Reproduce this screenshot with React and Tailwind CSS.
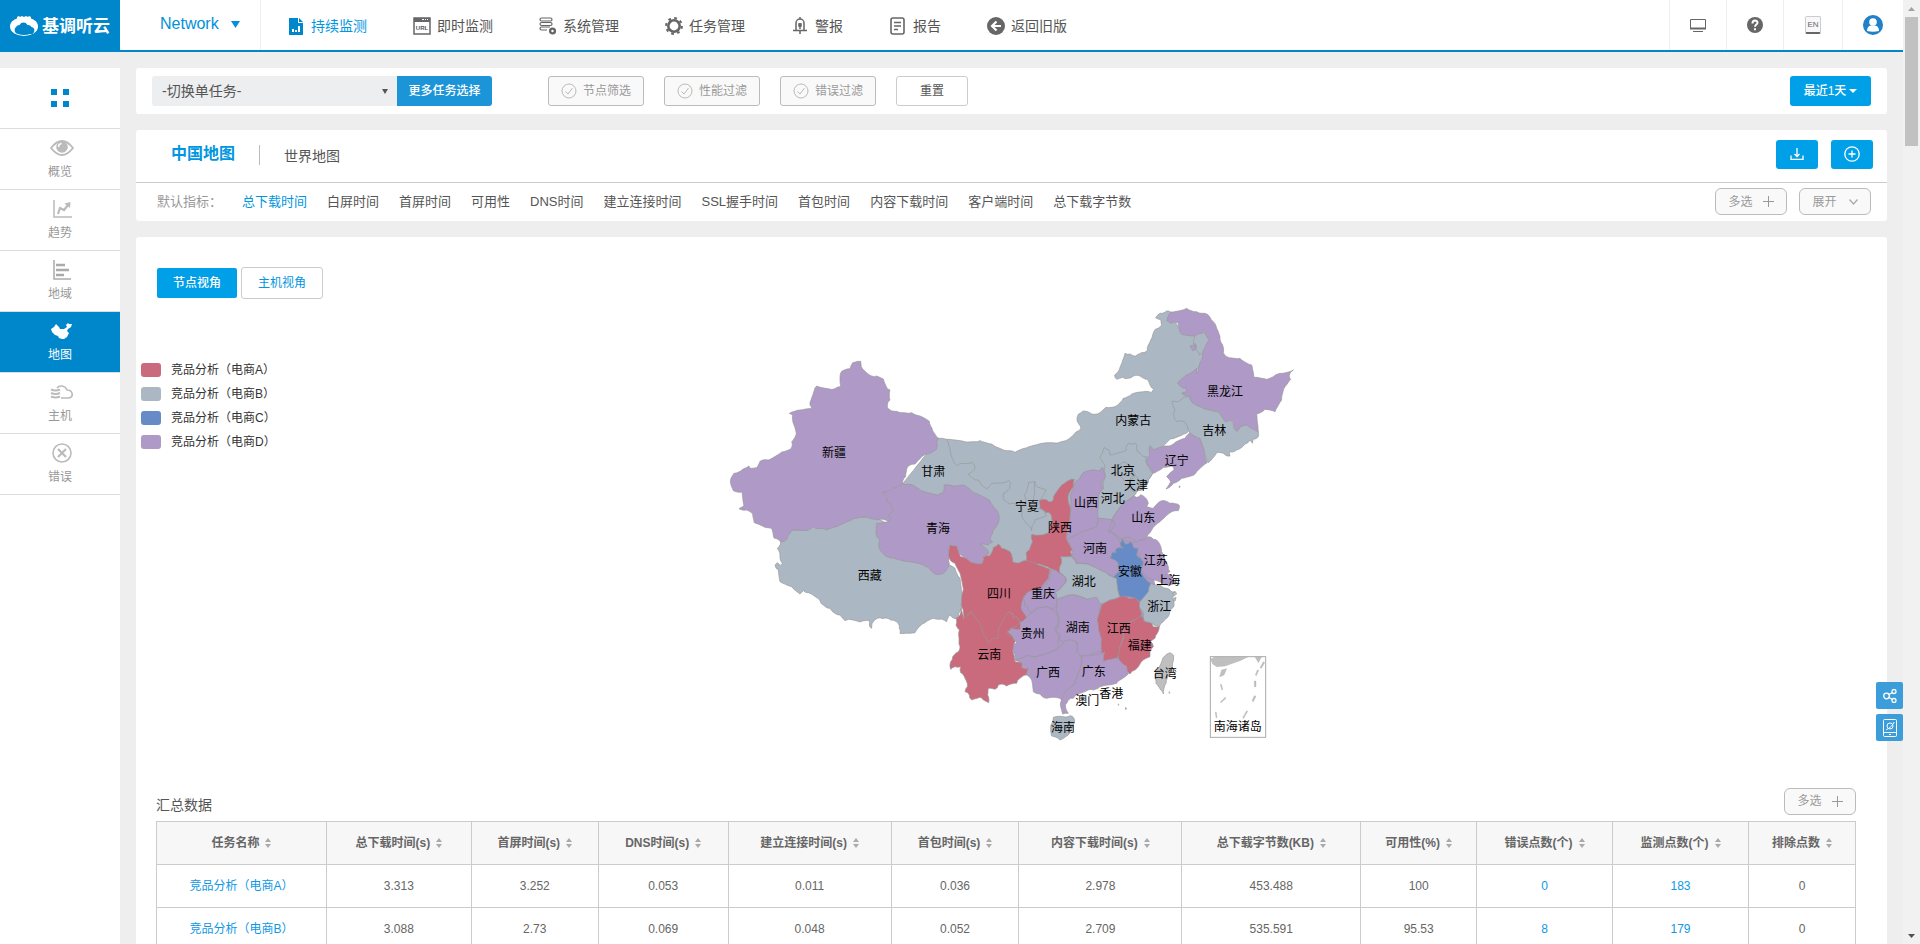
import React from 'react';

const PURPLE = '#ae99c7';
const SLATE = '#abb7c3';
const RED = '#c96a7d';
const BLUE = '#678bc7';
const GREY = '#bfbfbf';

// flat areas under the inland provinces, so no background shows between their borders
const backing = [
  { fill: PURPLE, points: '900,840 1000,810 1060,745 1180,690 1270,755 1300,860 1325,960 1235,1100 1200,1140 1080,1190 1000,1200 940,1150 890,1110 890,1000' },
  { fill: RED, points: '735,940 900,930 900,1030 870,1080 735,1080' },
];

// Order matters: the northern land mass is drawn first and the other provinces sit on top of it.
const provinces = [
  { id: 'neimenggu', fill: SLATE, points: '656,445 680,448 730,454 780,452 815,462 860,482 885,487 920,473 965,460 1005,459 1045,448 1068,426 1083,414 1072,395 1076,372 1090,363 1115,372 1140,368 1158,352 1190,347 1210,325 1235,312 1270,305 1295,308 1302,298 1288,280 1280,268 1260,258 1240,258 1225,265 1208,262 1190,268 1184,255 1200,232 1215,190 1230,192 1245,199 1265,188 1282,182 1285,165 1298,135 1306,118 1325,105 1323,90 1307,84 1320,70 1340,63 1352,66 1382,120 1465,130 1470,150 1448,205 1430,240 1400,300 1420,330 1400,400 1405,425 1350,447 1320,475 1310,520 1298,550 1285,570 1280,585 1265,600 1250,604 1245,612 1240,640 1200,660 1180,690 1140,690 1050,800 1000,850 900,840 800,800 780,762 700,740 560,600 547,582' },
  { id: 'xizang', fill: SLATE, points: '182,756 200,748 218,720 255,722 280,710 320,720 380,695 400,686 440,681 478,688 500,700 600,760 688,825 705,835 720,865 728,920 725,955 715,980 705,986 690,975 680,995 665,987 640,985 615,998 600,1008 585,1028 540,1030 538,1015 530,995 512,990 495,984 480,983 460,995 455,1015 448,1005 448,992 420,996 385,988 375,992 360,975 345,970 330,955 310,945 300,932 265,908 250,902 240,912 215,890 180,875 175,840 165,825 172,818 180,827 187,820 180,795 172,775' },
  { id: 'xinjiang', fill: PURPLE, points: '422,214 424,230 440,248 455,258 470,258 490,267 498,288 510,300 510,330 502,345 507,358 530,364 575,368 600,378 628,394 636,415 656,445 650,455 648,480 630,490 605,500 585,522 563,530 557,560 547,582 520,595 488,607 498,620 500,633 512,640 519,660 507,672 513,685 505,694 478,688 440,681 400,686 380,695 350,710 320,720 295,716 280,710 255,722 218,720 200,748 182,756 162,744 155,715 135,712 103,698 98,672 80,660 57,656 72,648 66,606 40,602 31,573 42,550 68,538 87,528 90,535 110,533 120,514 145,510 185,486 213,476 215,455 229,430 222,405 218,375 208,370 240,360 265,356 277,358 270,345 290,288 325,296 345,296 362,290 360,260 365,244 390,236 398,218' },
  { id: 'qinghai', fill: PURPLE, points: '547,582 570,583 600,600 655,615 668,610 672,585 700,588 730,585 760,608 785,618 810,632 830,660 837,690 820,720 810,745 818,756 805,765 780,762 798,775 807,790 795,796 785,822 750,815 730,800 710,780 690,765 688,820 670,850 645,852 625,832 610,825 560,815 520,804 500,800 478,775 480,750 468,730 470,700 505,694 513,685 507,672 519,660 512,640 500,633 498,620 488,607 520,595' },
  { id: 'heilongjiang', fill: PURPLE, points: '1352,66 1400,55 1430,65 1455,70 1470,82 1480,95 1490,115 1500,140 1508,165 1510,188 1520,200 1560,205 1595,225 1602,262 1640,268 1660,260 1680,250 1720,240 1708,255 1712,268 1695,290 1685,330 1665,365 1635,358 1610,372 1615,425 1580,405 1562,410 1550,425 1540,400 1530,390 1515,395 1495,365 1440,350 1415,335 1410,318 1385,310 1400,305 1398,295 1390,295 1373,280 1400,255 1430,235 1432,250 1445,210 1448,190 1468,150 1455,128 1425,138 1385,133 1375,100 1365,95 1350,100 1340,92' },
  { id: 'jiagedaqi', fill: PURPLE, points: '1410,168 1425,160 1428,175 1418,182' },
  { id: 'jilin', fill: SLATE, points: '1355,335 1370,336 1390,322 1410,320 1415,335 1440,350 1495,365 1515,395 1530,390 1540,400 1550,425 1562,410 1580,405 1615,425 1615,440 1600,448 1597,460 1590,450 1575,462 1550,480 1530,485 1530,498 1510,490 1490,488 1465,518 1452,480 1440,445 1410,430 1398,400 1385,392 1370,395 1362,380 1365,360' },
  { id: 'liaoning', fill: PURPLE, points: '1410,428 1428,440 1440,445 1452,480 1462,518 1430,545 1420,556 1385,565 1360,580 1345,594 1338,597 1352,575 1340,560 1362,540 1355,528 1330,532 1298,550 1288,530 1277,515 1290,495 1290,467 1302,480 1340,468 1360,462 1395,445' },
  { id: 'ningxia', fill: SLATE, points: '945,575 925,578 913,615 918,640 900,640 905,675 920,700 935,722 942,700 945,690 978,678 970,662 950,655 940,630 945,610' },
  { id: 'hebei', fill: SLATE, points: '1155,562 1152,545 1155,530 1140,505 1153,472 1165,478 1170,495 1218,482 1225,460 1248,460 1252,485 1265,496 1280,500 1278,515 1298,550 1285,570 1280,585 1265,600 1250,604 1240,618 1215,635 1195,660 1175,692 1130,685 1136,650 1135,615 1150,595' },
  { id: 'beijing', fill: SLATE, points: '1185,545 1180,530 1210,515 1235,530 1245,555 1230,570 1212,572 1200,560' },
  { id: 'tianjin', fill: SLATE, points: '1230,570 1245,556 1262,575 1256,600 1240,606 1228,590' },
  { id: 'shanxi', fill: PURPLE, points: '1148,532 1140,542 1125,540 1090,548 1078,568 1063,580 1050,615 1052,650 1045,710 1042,748 1070,742 1090,725 1130,710 1133,685 1132,650 1135,615 1150,595 1145,575 1155,562' },
  { id: 'shaanxi', fill: RED, points: '1063,568 1045,572 1025,585 1010,605 1000,622 995,635 980,630 958,632 960,655 978,668 990,670 995,700 988,725 960,735 935,733 938,755 928,780 918,790 918,812 950,822 990,835 1018,850 1025,815 1022,800 1055,798 1050,785 1058,780 1040,748 1045,710 1050,650 1045,615 1060,590' },
  { id: 'henan', fill: PURPLE, points: '1135,685 1178,690 1165,725 1185,735 1200,750 1205,770 1188,778 1170,800 1195,820 1198,845 1185,862 1160,850 1140,840 1110,825 1070,820 1058,800 1055,775 1043,750 1090,725 1130,710' },
  { id: 'jiangsu', fill: PURPLE, points: '1205,748 1240,758 1250,755 1265,750 1285,740 1300,748 1315,755 1325,785 1335,810 1345,830 1350,845 1340,850 1362,875 1335,885 1300,870 1280,865 1265,845 1270,820 1250,780 1230,770' },
  { id: 'shandong', fill: PURPLE, points: '1240,618 1250,622 1262,614 1270,618 1285,640 1280,650 1300,655 1325,632 1350,640 1378,646 1375,662 1350,668 1320,695 1300,712 1290,728 1283,735 1280,745 1265,750 1250,755 1230,742 1205,748 1170,725 1185,705 1178,690 1195,660 1215,635' },
  { id: 'anhui', fill: BLUE, points: '1205,748 1215,762 1232,755 1240,772 1255,775 1250,795 1262,805 1270,815 1258,840 1275,865 1293,880 1288,905 1260,935 1245,925 1225,920 1200,922 1192,890 1182,860 1198,845 1195,820 1170,805 1175,790 1188,788 1190,775 1210,775 1200,760' },
  { id: 'zhejiang', fill: SLATE, points: '1293,880 1320,885 1340,895 1352,903 1365,905 1360,930 1362,948 1350,960 1340,985 1330,995 1318,1010 1295,1000 1282,1000 1270,985 1268,965 1255,950 1260,935 1285,905' },
  { id: 'shanghai', fill: PURPLE, points: '1340,850 1355,855 1368,882 1345,888 1330,875' },
  { id: 'hubei', fill: SLATE, points: '1022,800 1055,800 1070,822 1110,825 1140,840 1160,850 1190,865 1192,890 1200,922 1165,932 1140,942 1120,930 1100,928 1055,915 1010,930 1005,905 1025,890 1040,870 1035,860 1018,845 1025,820' },
  { id: 'chongqing', fill: PURPLE, points: '990,838 1010,842 1035,860 1038,870 1025,890 1005,905 1012,945 1000,958 975,950 950,955 940,970 930,965 922,950 912,945 910,925 925,905 970,890 988,865' },
  { id: 'yunnan', fill: RED, points: '722,955 730,985 755,965 865,965 900,995 890,1010 870,1015 862,1030 885,1050 880,1090 885,1115 905,1118 905,1132 925,1135 920,1155 900,1165 890,1180 860,1188 845,1182 835,1185 825,1198 805,1195 803,1215 806,1238 790,1230 780,1222 755,1230 748,1215 735,1205 742,1190 735,1165 722,1148 722,1130 705,1130 692,1138 692,1115 698,1100 715,1085 720,1070 718,1020 708,1005 708,985 720,975' },
  { id: 'sichuan', fill: RED, points: '690,765 710,768 722,800 750,815 785,822 790,800 808,798 820,772 835,762 845,775 870,785 878,815 900,818 920,812 990,838 985,865 965,890 925,905 908,930 905,960 925,990 915,998 900,995 890,980 880,985 878,970 865,965 840,1010 835,1045 820,1045 805,1058 790,1035 780,1000 765,980 755,965 745,970 730,985 725,950 730,900 720,850 705,820 688,805' },
  { id: 'guizhou', fill: PURPLE, points: '862,1025 875,1015 900,1018 900,1000 930,970 950,955 975,950 1000,960 1012,975 1012,1000 1005,1015 1018,1040 1015,1075 980,1090 950,1100 920,1095 885,1110 885,1095 876,1085 880,1065 890,1058 878,1040' },
  { id: 'hunan', fill: PURPLE, points: '1012,930 1055,915 1100,928 1130,922 1145,945 1138,965 1132,990 1136,1020 1145,1050 1145,1085 1110,1095 1090,1100 1070,1085 1070,1055 1055,1050 1040,1062 1018,1050 1022,1035 1008,1020 1018,1000 1012,970' },
  { id: 'jiangxi', fill: RED, points: '1145,945 1170,930 1200,920 1213,918 1225,925 1245,922 1258,935 1265,970 1255,985 1240,990 1215,1010 1210,1040 1200,1070 1192,1105 1155,1115 1148,1100 1145,1050 1136,1020 1132,990' },
  { id: 'fujian', fill: RED, points: '1265,978 1272,995 1290,998 1300,1010 1318,1010 1312,1030 1305,1045 1292,1055 1300,1070 1290,1085 1290,1100 1270,1110 1260,1122 1245,1140 1230,1152 1222,1145 1220,1130 1195,1105 1200,1070 1212,1040 1215,1010 1240,992' },
  { id: 'guangxi', fill: PURPLE, points: '885,1110 920,1095 950,1100 980,1090 1015,1075 1030,1055 1055,1050 1070,1060 1070,1085 1085,1105 1080,1140 1065,1180 1040,1200 1025,1230 1005,1222 980,1225 960,1212 940,1205 935,1170 920,1155 925,1135 905,1132 905,1118' },
  { id: 'guangdong', fill: PURPLE, points: '1090,1095 1120,1095 1155,1085 1150,1115 1195,1105 1220,1130 1225,1152 1200,1170 1190,1180 1165,1185 1140,1190 1120,1200 1105,1200 1080,1210 1060,1225 1045,1230 1036,1245 1045,1270 1028,1272 1022,1250 1025,1230 1040,1200 1065,1180 1080,1140 1085,1105' },
  { id: 'hainan', fill: SLATE, points: '1000,1282 1030,1280 1050,1277 1062,1285 1060,1305 1045,1335 1020,1350 995,1338 993,1305' },
  { id: 'taiwan', fill: GREY, points: '1350,1088 1360,1095 1358,1120 1350,1150 1338,1180 1330,1212 1322,1200 1308,1180 1306,1160 1312,1140 1328,1105' },
];

// inner borders that separate provinces of the same colour
const borders = [
  '680,448 692,490 700,512 712,527 730,520 757,517 765,535 745,552 755,562 775,570 785,585 800,596 815,580 850,578 866,570 872,580 870,595 850,610 852,630 868,642 900,645',
  '1425,138 1420,160 1428,180 1438,195 1445,190',
  '945,575 950,590 978,600 958,632',
];

const islets = [
  '1358,910 1366,905 1370,912 1362,918',
  '1362,925 1368,922 1366,932 1360,934',
  '1195,1242 1197,1244 1195,1246',
  '1217,1252 1220,1257 1216,1258',
  '1377,588 1381,590 1378,593',
  '1348,1205 1350,1208 1347,1210',
];

const labels = [
  ['新疆', 342, 488], ['甘肃', 640, 545], ['青海', 654, 718], ['西藏', 449, 858],
  ['四川', 837, 911], ['内蒙古', 1240, 392], ['黑龙江', 1515, 305], ['吉林', 1483, 422],
  ['辽宁', 1370, 512], ['北京', 1208, 542], ['天津', 1248, 588], ['河北', 1178, 627],
  ['山西', 1098, 638], ['山东', 1270, 685], ['宁夏', 921, 650], ['陕西', 1020, 713],
  ['河南', 1125, 777], ['江苏', 1307, 812], ['安徽', 1230, 847], ['上海', 1345, 873],
  ['湖北', 1091, 876], ['重庆', 969, 911], ['浙江', 1318, 950], ['贵州', 938, 1031],
  ['湖南', 1073, 1014], ['江西', 1196, 1017], ['福建', 1259, 1067], ['云南', 808, 1095],
  ['广西', 984, 1150], ['广东', 1121, 1146], ['香港', 1174, 1212], ['澳门', 1102, 1232],
  ['海南', 1029, 1313], ['台湾', 1334, 1153], ['南海诸岛', 1553, 1311],
];

// Breaks every edge into short uneven steps. The offset only depends on the two
// end points, so neighbouring provinces get the same shared border.
const roughen = (str, closed = true) => {
  const pts = str.split(' ').map((p) => p.split(',').map(Number));
  const out = [];
  const count = closed ? pts.length : pts.length - 1;
  for (let i = 0; i < count; i++) {
    let a = pts[i];
    let b = pts[(i + 1) % pts.length];
    const flipped = a[0] > b[0] || (a[0] === b[0] && a[1] > b[1]);
    if (flipped) [a, b] = [b, a];
    const dx = b[0] - a[0];
    const dy = b[1] - a[1];
    const len = Math.hypot(dx, dy) || 1;
    const steps = Math.max(1, Math.round(len / 8));
    const seg = [];
    for (let s = 0; s <= steps; s++) {
      const t = s / steps;
      const noise = Math.sin(a[0] * 12.9 + b[1] * 78.2 + s * 37.7) * 2.4;
      const k = s === 0 || s === steps ? 0 : noise / len;
      seg.push([Math.round(a[0] + dx * t - dy * k), Math.round(a[1] + dy * t + dx * k)]);
    }
    if (flipped) seg.reverse();
    out.push(...seg);
  }
  return out.map((p) => p.join(',')).join(' ');
};

const ChinaMap = () => (
  <svg viewBox="0 27 1749 1350" className="w-[583px] h-[450px]" role="img" aria-label="中国地图">
    {backing.map((b) => (
      <polygon key={b.fill} points={b.points} fill={b.fill} />
    ))}
    <g stroke="#999" strokeWidth="2" strokeLinejoin="round">
      {provinces.map((p) => (
        <polygon key={p.id} points={roughen(p.points)} fill={p.fill} />
      ))}
      {borders.map((b) => (
        <polyline key={b} points={roughen(b, false)} fill="none" />
      ))}
      {islets.map((b) => (
        <polygon key={b} points={b} fill={GREY} />
      ))}
    </g>
    <rect x="1471" y="1100" width="166" height="242" fill="none" stroke="#aaa" strokeWidth="3" />
    <g fill={GREY} stroke="#aaa" strokeWidth="1">
      <path d="M1472 1108L1485 1100H1585L1560 1112L1515 1128L1490 1130L1478 1122Z" />
      <path d="M1605 1100H1625L1615 1118Z" />
      <path d="M1505 1140L1520 1136L1512 1155L1499 1160Z" />
      <path d="M1630 1115L1634 1118L1624 1135L1620 1133Z" />
      <path d="M1612 1140L1616 1141L1609 1157L1606 1155Z" />
      <path d="M1603 1173H1608V1190H1603Z" />
      <path d="M1603 1217L1608 1219L1600 1235L1596 1232Z" />
      <path d="M1580 1262L1583 1264L1571 1285L1568 1283Z" />
      <path d="M1501 1183L1505 1184L1508 1200L1505 1199Z" />
      <path d="M1516 1222L1518 1225L1503 1238L1501 1236Z" />
      <path d="M1486 1266L1489 1267L1491 1283L1488 1283Z" />
    </g>
    <g fontSize="36" fill="#000" textAnchor="middle" dominantBaseline="central">
      {labels.map(([name, x, y]) => (
        <text key={name} x={x} y={y}>{name}</text>
      ))}
    </g>
  </svg>
);

const topNav = [
  {
    label: '持续监测', active: true,
    icon: (
      <svg width="18" height="18" viewBox="0 0 18 18">
        <path d="M2 1h9l5 5v12H2z" fill="#0086cb" />
        <path d="M11 0v6h5z" fill="#fff" />
        <path d="M12 1v4h4z" fill="#0086cb" />
        <path d="M5 12h2v3H5zM8 13h2v2H8zM11 9h2v6h-2z" fill="#fff" />
      </svg>
    ),
  },
  {
    label: '即时监测',
    icon: (
      <svg width="18" height="18" viewBox="0 0 18 18">
        <path d="M1 1h16v16H1z" fill="none" stroke="#666" strokeWidth="1.5" />
        <path d="M1 1h16v4H1z" fill="#666" />
        <path d="M9 2.5h2M12 2.5h1M14 2.5h1" stroke="#fff" />
        <text x="9" y="13" fontSize="6" fontWeight="bold" textAnchor="middle" fill="#555">URL</text>
      </svg>
    ),
  },
  {
    label: '系统管理',
    icon: (
      <svg width="18" height="18" viewBox="0 0 18 18" fill="none" stroke="#666" strokeWidth="1.2">
        <rect x="1" y="1" width="12" height="3" rx="1.5" />
        <rect x="1" y="5.5" width="12" height="3" rx="1.5" />
        <path d="M8 13H2.500a1.500 1.500 0 0 1 0-3H11" />
        <circle cx="13.500" cy="14" r="2.400" strokeWidth="2.400" />
      </svg>
    ),
  },
  {
    label: '任务管理',
    icon: (
      <svg width="18" height="18" viewBox="0 0 18 18" fill="none" stroke="#666">
        <circle cx="9" cy="9" r="5.700" strokeWidth="2.600" />
        <circle cx="9" cy="9" r="7.900" strokeWidth="2" strokeDasharray="2.800 3.400" />
      </svg>
    ),
  },
  {
    label: '警报',
    icon: (
      <svg width="18" height="18" viewBox="0 0 18 18" fill="none" stroke="#666" strokeWidth="1.500">
        <path d="M5 13V6a4 4 0 0 1 8 0v7M2 13.500h14M9 0v2M9 14v3M9 6v6" />
        <path d="M8 7h2v2H8z" />
      </svg>
    ),
  },
  {
    label: '报告',
    icon: (
      <svg width="18" height="18" viewBox="0 0 18 18" fill="none" stroke="#666" strokeWidth="1.600">
        <rect x="2" y="1" width="13" height="16" rx="2" />
        <path d="M5 5.500h7M5 9h7M5 12.500h4" />
      </svg>
    ),
  },
  {
    label: '返回旧版',
    icon: (
      <svg width="18" height="18" viewBox="0 0 18 18">
        <circle cx="9" cy="9" r="9" fill="#666" />
        <path d="M9.500 4.500L5 9l4.500 4.500M5.500 9H14" fill="none" stroke="#fff" strokeWidth="2.200" />
      </svg>
    ),
  },
];

const sideNav = [
  {
    label: '概览',
    icon: (
      <svg width="24" height="18" viewBox="0 0 24 18">
        <path d="M1 9Q12-5 23 9Q12 23 1 9z" fill="none" stroke="#bbb" strokeWidth="1.800" />
        <circle cx="12" cy="8" r="5.800" fill="#bbb" />
        <path d="M8.500 8a3.500 3.500 0 0 1 3-3.500" fill="none" stroke="#fff" strokeWidth="1.500" />
      </svg>
    ),
  },
  {
    label: '趋势',
    icon: (
      <svg width="20" height="18" viewBox="0 0 20 18" fill="none" stroke="#bbb">
        <path d="M2 0v17h18" strokeWidth="1.500" />
        <path d="M6 14l2-6 4 2 4-5" strokeWidth="2.200" />
        <path d="M12.500 3.500l6-1.500-.5 6z" fill="#bbb" stroke="none" />
      </svg>
    ),
  },
  {
    label: '地域',
    icon: (
      <svg width="20" height="20" viewBox="0 0 20 20" fill="none" stroke="#aaa">
        <path d="M2 0v19h17" strokeWidth="1.500" />
        <path d="M4 5h9M4 10h13M4 15h8" strokeWidth="2.500" />
      </svg>
    ),
  },
  {
    label: '地图', active: true,
    icon: (
      <svg width="22" height="16" viewBox="0 0 22 16">
        <path d="M0 6l3-2 2-3 3 3 1 2 4 0 3-2-1-2 2-2 1 1 3 0-1 3-3 2-1 2 2 2-2 4-3 2-2 0-3-1-1-2-3-1-3-3z" fill="#fff" />
      </svg>
    ),
  },
  {
    label: '主机',
    icon: (
      <svg width="24" height="14" viewBox="0 0 24 14" fill="none" stroke="#bbb">
        <path d="M7 3c2-3 8-3 10 2 6 0 7 7 2 8h-8" strokeWidth="1.600" />
        <path d="M1 4.500q4.500 2 9 0M1 8q4.500 2 9 0M1 11.500q4.500 2 9 0" strokeWidth="2.200" />
      </svg>
    ),
  },
  {
    label: '错误',
    icon: (
      <svg width="20" height="20" viewBox="0 0 20 20" fill="none" stroke="#bbb">
        <circle cx="10" cy="10" r="9" strokeWidth="1.600" />
        <path d="M6 6l8 8M14 6l-8 8" strokeWidth="2.200" />
      </svg>
    ),
  },
];

const filters = ['节点筛选', '性能过滤', '错误过滤'];

const metrics = [
  '总下载时间', '白屏时间', '首屏时间', '可用性', 'DNS时间', '建立连接时间',
  'SSL握手时间', '首包时间', '内容下载时间', '客户端时间', '总下载字节数',
];

const legend = [
  { name: '竞品分析（电商A）', color: RED },
  { name: '竞品分析（电商B）', color: SLATE },
  { name: '竞品分析（电商C）', color: BLUE },
  { name: '竞品分析（电商D）', color: PURPLE },
];

const columns = [
  { title: '任务名称', width: 170, link: true },
  { title: '总下载时间(s)', width: 145 },
  { title: '首屏时间(s)', width: 127 },
  { title: 'DNS时间(s)', width: 130 },
  { title: '建立连接时间(s)', width: 163 },
  { title: '首包时间(s)', width: 128 },
  { title: '内容下载时间(s)', width: 163 },
  { title: '总下载字节数(KB)', width: 179 },
  { title: '可用性(%)', width: 116 },
  { title: '错误点数(个)', width: 136, link: true },
  { title: '监测点数(个)', width: 136, link: true },
  { title: '排除点数', width: 107 },
];

const rows = [
  ['竞品分析（电商A）', '3.313', '3.252', '0.053', '0.011', '0.036', '2.978', '453.488', '100', '0', '183', '0'],
  ['竞品分析（电商B）', '3.088', '2.73', '0.069', '0.048', '0.052', '2.709', '535.591', '95.53', '8', '179', '0'],
];

const MultiSelectButton = () => (
  <button className="flex h-[27px] w-[72px] items-center justify-center gap-[10px] rounded-md border border-[#bbb] bg-[#f9f9f9] text-xs text-[#999]">
    多选
    <svg width="11" height="11" viewBox="0 0 11 11" stroke="#999">
      <path d="M5.500 0v11M0 5.500h11" />
    </svg>
  </button>
);

const Header = () => (
  <header className="flex h-[52px] border-b-2 border-[#0086cb] bg-white">
    <a href="#" className="-mb-[2px] flex w-[120px] shrink-0 items-center gap-1 bg-[#0086cb] pb-px pl-[10px] text-[17px] font-bold text-white">
      <svg width="28" height="20" viewBox="0 0 28 20">
        <ellipse cx="14" cy="10.500" rx="14" ry="9.500" fill="#fff" />
        <path d="M7 1l2-1 1 1 2-1 2 1 2-1 2 1 1-1 2 1v2H7z" fill="#fff" />
        <path d="M8 18a4 4 0 0 1-2-7 4 4 0 0 1 3.500-2 4.500 4.500 0 0 1 8 0 4 4 0 0 1 4 2 3.500 3.500 0 0 1-1.500 7q-6 2-12 0z" fill="#0086cb" />
      </svg>
      <span className="pt-[3px]">基调听云</span>
    </a>
    <button className="flex w-[141px] shrink-0 items-center gap-3 border-r border-[#eee] pb-[2px] pl-10 text-base text-[#0091da]">
      Network
      <svg width="9" height="7" viewBox="0 0 9 7" fill="#0091da"><path d="M0 0h9L4.500 7z" /></svg>
    </button>
    <nav className="flex flex-1 items-center gap-[46px] pt-px pl-[26px]">
      {topNav.map((item) => (
        <a
          key={item.label}
          href="#"
          className={`flex items-center gap-[6px] text-sm whitespace-nowrap ${item.active ? 'text-[#0096e0]' : 'text-[#555]'}`}
        >
          {item.icon}
          {item.label}
        </a>
      ))}
    </nav>
    <div className="flex shrink-0">
      <button aria-label="大屏" className="flex w-[57px] items-center justify-center border-l border-[#eee]">
        <svg width="16" height="13" viewBox="0 0 16 13" fill="none" stroke="#666">
          <path d="M.5.5h15v9H.5z" />
          <path d="M0 9.500h16" strokeWidth="2" />
          <path d="M3 12.500h10" />
        </svg>
      </button>
      <button aria-label="帮助" className="flex w-[57px] items-center justify-center border-l border-[#eee]">
        <svg width="16" height="16" viewBox="0 0 16 16">
          <circle cx="8" cy="8" r="8" fill="#666" />
          <path d="M5.500 6.500c0-4 5-3.500 5-.8 0 1.800-2.500 1.800-2.500 4M8 11.200v2" fill="none" stroke="#fff" strokeWidth="2" />
        </svg>
      </button>
      <button aria-label="English" className="flex w-[59px] items-center justify-center border-l border-[#eee]">
        <span className="flex h-[18px] w-4 items-center justify-center rounded-xs border border-b-2 border-[#ccc] border-b-[#666] bg-[#f8f8f8] text-[8px] text-[#666]">EN</span>
      </button>
      <button aria-label="用户" className="flex w-[61px] items-center justify-center border-l border-[#eee]">
        <svg width="20" height="20" viewBox="0 0 20 20">
          <circle cx="10" cy="10" r="10" fill="#2080c8" />
          <circle cx="10" cy="7" r="3.800" fill="#fff" />
          <path d="M4 16q0-5 4-5.500h4q4 .5 4 5.500-6 1.500-12 0z" fill="#fff" />
        </svg>
      </button>
    </div>
  </header>
);

const Sidebar = () => (
  <aside className="w-[120px] shrink-0 bg-white">
    <button aria-label="菜单" className="flex h-[61px] w-full items-center justify-center border-b border-[#ddd]">
      <span className="grid grid-cols-2 gap-[6px]">
        <span className="size-[6px] bg-[#0086cb]"></span>
        <span className="size-[6px] bg-[#0086cb]"></span>
        <span className="size-[6px] bg-[#0086cb]"></span>
        <span className="size-[6px] bg-[#0086cb]"></span>
      </span>
    </button>
    {sideNav.map((item) => (
      <a
        key={item.label}
        href="#"
        className={`flex h-[61px] flex-col items-center border-b border-[#ddd] pt-2 text-xs ${item.active ? 'bg-[#0086cb] text-white' : 'text-[#999]'}`}
      >
        <span className="flex h-[22px] items-center pl-[3px]">{item.icon}</span>
        <span className="mt-[3px] leading-5">{item.label}</span>
      </a>
    ))}
  </aside>
);

const FilterBar = () => (
  <section className="flex items-center rounded-[3px] bg-white py-2 pr-4 pl-4">
    <div className="relative w-[245px]">
      <select aria-label="切换单任务" className="h-[30px] w-full appearance-none rounded-l-[3px] bg-[#eceef0] pl-[10px] text-sm text-[#555]">
        <option>-切换单任务-</option>
      </select>
      <svg width="6" height="5" viewBox="0 0 6 5" fill="#555" className="pointer-events-none absolute top-[13px] right-[9px]">
        <path d="M0 0h6L3 5z" />
      </svg>
    </div>
    <button className="h-[30px] w-[95px] rounded-r-[3px] bg-[#1c95d8] text-xs font-medium text-white">更多任务选择</button>
    <div className="ml-14 flex gap-5">
      {filters.map((f) => (
        <button key={f} className="flex h-[30px] w-[96px] items-center justify-center gap-[6px] rounded-[3px] border border-[#bbb] bg-[#f9f9f9] text-xs text-[#999]">
          <svg width="16" height="16" viewBox="0 0 16 16" fill="none" stroke="#bbb">
            <circle cx="8" cy="8" r="7" />
            <path d="M4.500 8.500l2.500 2.500 4.500-6" />
          </svg>
          {f}
        </button>
      ))}
      <button className="h-[30px] w-[72px] rounded-[3px] border border-[#ccc] bg-white text-xs text-[#555]">重置</button>
    </div>
    <button className="ml-auto flex h-[30px] w-[81px] items-center justify-center gap-[3px] rounded-[3px] bg-[#00a0e9] text-xs font-medium text-white">
      最近1天
      <svg width="8" height="4" viewBox="0 0 8 4" fill="#fff"><path d="M0 0h8L4 4z" /></svg>
    </button>
  </section>
);

const MetricPanel = () => (
  <section className="rounded-[3px] bg-white">
    <div className="flex h-[53px] items-center border-b border-[#ccc] pr-[14px] pl-[35px]">
      <button className="pb-1 text-base font-bold text-[#0096e0]">中国地图</button>
      <span className="mx-6 mb-[3px] h-5 w-px bg-[#bbb]"></span>
      <button className="text-sm text-[#555]">世界地图</button>
      <div className="mb-1 ml-auto flex gap-[13px]">
        <button aria-label="下载" className="flex h-[29px] w-[42px] items-center justify-center rounded-[3px] bg-[#00a0e9]">
          <svg width="14" height="12" viewBox="0 0 14 12" fill="none" stroke="#fff" strokeWidth="1.300">
            <path d="M7 0v8M4.500 6L7 8.500 9.500 6M1 7.500v4h12v-4" />
          </svg>
        </button>
        <button aria-label="添加" className="flex h-[29px] w-[42px] items-center justify-center rounded-[3px] bg-[#00a0e9]">
          <svg width="16" height="16" viewBox="0 0 16 16" fill="none" stroke="#fff" strokeWidth="1.300">
            <circle cx="8" cy="8" r="7.200" />
            <path d="M8 4.500v7M4.500 8h7" />
          </svg>
        </button>
      </div>
    </div>
    <div className="flex h-[38px] items-center pr-4 pb-px pl-[21px] text-[13px] text-[#555]">
      <span className="w-[85px] text-[#999]">默认指标：</span>
      <div className="flex gap-5">
        {metrics.map((m, i) => (
          <button key={m} className={i === 0 ? 'text-[#0096e0]' : ''}>{m}</button>
        ))}
      </div>
      <div className="ml-auto flex gap-3">
        <MultiSelectButton />
        <button className="flex h-[27px] w-[72px] items-center justify-center gap-3 rounded-md border border-[#bbb] bg-[#f9f9f9] text-xs text-[#999]">
          展开
          <svg width="9" height="6" viewBox="0 0 9 6" fill="none" stroke="#aaa" strokeWidth="1.300"><path d="M.5.5l4 4.500 4-4.500" /></svg>
        </button>
      </div>
    </div>
  </section>
);

const SummaryTable = () => (
  <table className="mt-[6px] w-full table-fixed border-collapse text-center text-xs text-[#666]">
    <colgroup>
      {columns.map((c) => (
        <col key={c.title} style={{ width: `${c.width / 17}%` }} />
      ))}
    </colgroup>
    <thead>
      <tr className="h-[43px] bg-[#f7f7f7]">
        {columns.map((c) => (
          <th key={c.title} className="border border-[#ccc] p-0 font-bold">
            <button className="inline-flex items-center gap-[6px] whitespace-nowrap">
              {c.title}
              <svg width="6" height="10" viewBox="0 0 6 10" fill="#aaa"><path d="M0 4h6L3 0zM0 6h6L3 10z" /></svg>
            </button>
          </th>
        ))}
      </tr>
    </thead>
    <tbody>
      {rows.map((row) => (
        <tr key={row[0]} className="h-[43px]">
          {row.map((cell, i) => (
            <td key={columns[i].title} className="border border-[#ccc] p-0">
              {columns[i].link ? <a href="#" className="text-[#0f98e4]">{cell}</a> : cell}
            </td>
          ))}
        </tr>
      ))}
    </tbody>
  </table>
);

const MapPanel = () => (
  <section className="rounded-t-[3px] bg-white pt-[30px]">
    <div className="flex items-center gap-1 pl-[21px]">
      <button className="h-[30px] w-20 rounded-xs bg-[#00a0e9] text-xs font-medium text-white">节点视角</button>
      <button className="h-8 w-[82px] rounded-[3px] border border-[#ccc] bg-white text-xs text-[#0096e0]">主机视角</button>
    </div>
    <div className="grid">
      <div className="col-start-1 row-start-1 flex justify-center">
        <ChinaMap />
      </div>
      <ul className="col-start-1 row-start-1 flex flex-col gap-1 justify-self-start pt-[61px] pl-[5px]">
        {legend.map((item) => (
          <li key={item.name} className="flex h-5 items-center gap-[10px] text-xs text-[#333]">
            <span className="h-[14px] w-5 rounded-[3px]" style={{ backgroundColor: item.color }}></span>
            {item.name}
          </li>
        ))}
      </ul>
    </div>
    <div className="pt-[38px] pr-[31px] pl-5">
      <div className="flex items-center justify-between">
        <h2 className="pt-2 text-sm text-[#555]">汇总数据</h2>
        <MultiSelectButton />
      </div>
      <SummaryTable />
    </div>
  </section>
);

const SideTools = () => (
  <div className="fixed right-[17px] bottom-[203px] flex flex-col gap-[5px]">
    <button aria-label="分享" className="flex size-[27px] items-center justify-center rounded-xs bg-[#3b9dd9]">
      <svg width="14" height="14" viewBox="0 0 14 14" fill="none" stroke="#fff" strokeWidth="1.300">
        <circle cx="3.500" cy="7" r="2.800" />
        <circle cx="11" cy="2.500" r="2" />
        <circle cx="11" cy="11.500" r="2" />
        <path d="M6 5.500l3.500-2M6 8.500l3.500 2" />
      </svg>
    </button>
    <button aria-label="手机端" className="flex size-[27px] items-center justify-center rounded-xs bg-[#3b9dd9]">
      <svg width="14" height="18" viewBox="0 0 14 18" fill="none" stroke="#fff">
        <rect x=".5" y=".5" width="13" height="17" rx="1" />
        <path d="M.5 13.500h13M6 15.500h2" />
        <circle cx="7" cy="7" r="3" />
        <path d="M3 10.500c1 1 8-5 8-7.500" />
      </svg>
    </button>
  </div>
);

const ScrollTrack = () => (
  <div aria-hidden="true" className="flex w-[17px] shrink-0 flex-col items-center justify-between bg-[#f1f1f1]">
    <div className="flex flex-col items-center">
      <svg width="17" height="17" viewBox="0 0 17 17" fill="#a3a3a3"><path d="M5 11h7L8.500 7z" /></svg>
      <div className="h-[129px] w-[13px] bg-[#c1c1c1]"></div>
    </div>
    <svg width="17" height="17" viewBox="0 0 17 17" fill="#505050"><path d="M5 7h7l-3.500 4z" /></svg>
  </div>
);

const App = () => (
  <div className="flex h-screen overflow-hidden bg-[#eee] font-['Liberation_Sans','Noto_Sans_CJK_SC',sans-serif]">
    <div className="flex min-w-0 flex-1 flex-col">
      <Header />
      <div className="flex min-h-0 flex-1 gap-4 overflow-hidden pt-4 pr-4">
        <Sidebar />
        <main className="flex min-w-0 flex-1 flex-col gap-4">
          <FilterBar />
          <MetricPanel />
          <MapPanel />
        </main>
      </div>
    </div>
    <ScrollTrack />
    <SideTools />
  </div>
);

export default App;
